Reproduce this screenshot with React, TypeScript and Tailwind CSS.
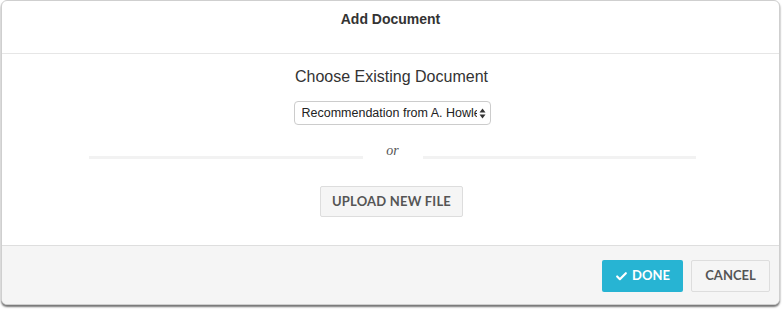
import { Check } from "lucide-react";

export default function App() {
  return (
    <div className="w-[782px] h-[310px] bg-white pl-px pr-[2px] pt-0 font-['Liberation_Sans',Arial,sans-serif]">
      <div className="h-[305px] flex flex-col border border-[#cfcfcf] rounded-md overflow-hidden bg-white shadow-[0_2px_2px_rgba(0,0,0,0.55)]">
        {/* Header */}
        <div className="h-[53px] shrink-0 border-b border-[#e6e6e6] pt-[8px] text-center">
          <h3 className="text-[14px] leading-5 font-bold text-[#333]">Add Document</h3>
        </div>

        {/* Body */}
        <div className="flex-1 flex flex-col items-center pt-[12px]">
          <p className="text-[16px] leading-[22px] text-[#333] pl-[2px]">Choose Existing Document</p>
          <div className="mt-[13px] ml-[3px] w-[197px] h-[24px] border border-[#cccccc] rounded-[4px] bg-white flex items-center pl-[7px] pr-[4px]">
            <span className="flex-1 overflow-hidden whitespace-nowrap text-[12.5px] text-[#222] leading-none">
              Recommendation from A. Howle
            </span>
            <svg width="7" height="11" viewBox="0 0 7 11" className="shrink-0 ml-[2px]">
              <path d="M3.5 0.5 L6.5 4.5 L0.5 4.5 Z" fill="#333" />
              <path d="M3.5 10.5 L6.5 6.5 L0.5 6.5 Z" fill="#333" />
            </svg>
          </div>

          <div className="mt-[16px] w-[607px] self-start ml-[87px] flex items-center">
            <div className="flex-1 h-[3px] bg-[#f2f2f2] mt-[12px]" />
            <div className="w-[60px] text-center font-['Liberation_Serif',serif] italic text-[14px] leading-5 text-[#555]">
              or
            </div>
            <div className="flex-1 h-[3px] bg-[#f2f2f2] mt-[12px]" />
          </div>

          <button
            type="button"
            className="mt-[25px] ml-[2px] w-[143px] h-[31px] bg-[#f5f5f5] border border-[#dddddd] rounded-[2px] text-[13px] font-bold text-[#555] font-['Lato',sans-serif] tracking-[0.2px]"
          >
            UPLOAD NEW FILE
          </button>
        </div>

        {/* Footer */}
        <div className="h-[59px] shrink-0 bg-[#f5f5f5] border-t border-[#dedede] flex items-start justify-end gap-[8px] pt-[14px] pr-[9px]">
          <button
            type="button"
            className="w-[81px] h-[32px] bg-[#27b4d3] rounded-[2px] text-white text-[13px] font-bold font-['Lato',sans-serif] flex items-center justify-center gap-[4px]"
          >
            <Check size={13} strokeWidth={4} />
            DONE
          </button>
          <button
            type="button"
            className="w-[79px] h-[32px] bg-[#f5f5f5] border border-[#dddddd] rounded-[2px] text-[#555] text-[13px] font-bold font-['Lato',sans-serif]"
          >
            CANCEL
          </button>
        </div>
      </div>
    </div>
  );
}
